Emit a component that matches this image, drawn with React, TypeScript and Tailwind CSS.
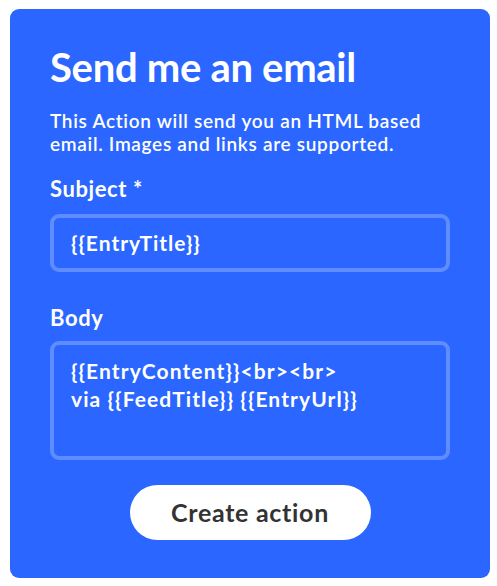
export default function App() {
  return (
    <div className="w-[497px] h-[586px] bg-white pt-[9px] pl-[10px]" style={{ fontFamily: "Lato, 'Noto Sans', sans-serif" }}>
      <div className="w-[480px] h-[569px] rounded-[9px] bg-[#2a66ff] px-[40px] pt-[34px] text-white">
        {/* Heading */}
        <h1 className="text-[40px] font-bold leading-[48px] tracking-[-0.3px]">Send me an email</h1>
        <p className="mt-[18px] text-[19px] font-semibold leading-[23px] tracking-[0.7px]">
          This Action will send you an HTML based
          <br />
          email. Images and links are supported.
        </p>

        {/* Subject */}
        <label className="mt-[20px] block text-[22px] font-bold leading-[28px] tracking-[0.6px]">Subject *</label>
        <div className="mt-[11px] h-[58px] rounded-[9px] border-[4px] border-white/25 px-[17px] flex items-center">
          <span className="text-[21px] font-bold tracking-[1px]">{"{{EntryTitle}}"}</span>
        </div>

        {/* Body */}
        <label className="mt-[32px] block text-[22px] font-bold leading-[28px] tracking-[0.6px]">Body</label>
        <div className="mt-[9px] h-[119px] rounded-[9px] border-[4px] border-white/25 px-[17px] pt-[12px] text-[21px] font-bold leading-[28px] tracking-[1.1px]">
          {"{{EntryContent}}<br><br>"}
          <br />
          {"via {{FeedTitle}} {{EntryUrl}}"}
        </div>

        {/* Submit */}
        <div className="mt-[25px] flex justify-center">
          <button
            type="button"
            className="h-[55px] w-[241px] rounded-full bg-white text-[25px] font-bold tracking-[0.7px] text-[#333333]"
          >
            Create action
          </button>
        </div>
      </div>
    </div>
  );
}
